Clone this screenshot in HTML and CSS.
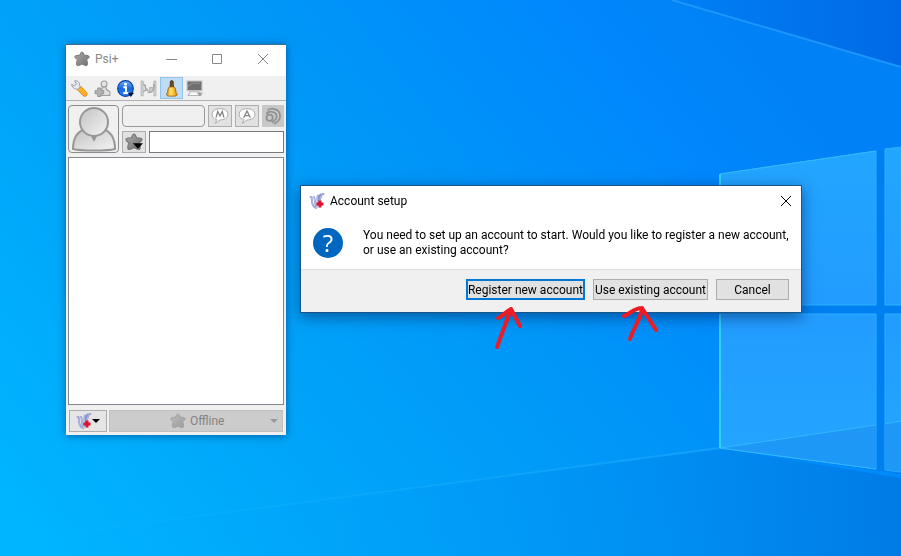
FILE: index.html
```
<!DOCTYPE html>
<html lang="en">
<head>
  <meta charset="UTF-8" />
  <title>Psi+</title>
  <link rel="stylesheet" href="styles.css">
</head>
<body>
  <svg class="symbols" aria-hidden="true">
    <defs>
      <linearGradient id="silver" x1="0" y1="0" x2="1" y2="1">
        <stop offset="0" stop-color="#aaa" />
        <stop offset="1" stop-color="#707070" />
      </linearGradient>
      <linearGradient id="person" x1="0" y1="0" x2="1" y2="1">
        <stop offset="0" stop-color="#c2c2c2" />
        <stop offset="1" stop-color="#f4f4f4" />
      </linearGradient>
      <linearGradient id="gold" x1="0" y1="0" x2="1" y2="0">
        <stop offset="0" stop-color="#e88a00" />
        <stop offset="0.4" stop-color="#ffe36a" />
        <stop offset="1" stop-color="#e89000" />
      </linearGradient>
      <linearGradient id="info" x1="0" y1="0" x2="0" y2="1">
        <stop offset="0" stop-color="#6fb4ff" />
        <stop offset="0.5" stop-color="#1766dd" />
        <stop offset="1" stop-color="#2590ff" />
      </linearGradient>
    </defs>
    <symbol id="star" viewBox="0 0 16 16">
      <path d="M8 1c1 0 1.500 1 2.200 3.200 3.300 0 5 .6 5 1.600s-1 1.700-2.600 3c1.200 3.200 1.200 5 .4 5.600S11 14.500 8 13c-3 1.500-4.200 2-5 1.400S2.200 12 3.400 8.800C1.800 7.500.8 6.800.8 5.800s1.700-1.600 5-1.600C6.500 2 7 1 8 1z" fill="url(#silver)" stroke="#777" stroke-width="1" />
    </symbol>
    <symbol id="psi" viewBox="0 0 16 16">
      <path d="M1.500 4c2-.5 1 2 1.500 5s1.500 5 4 6M5 4c1.500 2 0 6 2.500 10M9 2.500c-2 3 1 6-1.500 12M14.500 1C11.500.5 12 5 10.500 8M11.500 1.500C9 4 10 7 9 10" fill="none" stroke="#8891cc" stroke-width="1.800" stroke-linecap="round" />
      <path d="M1.500 4c2-.5 1 2 1.500 5s1.500 5 4 6M5 4c1.500 2 0 6 2.500 10M9 2.500c-2 3 1 6-1.500 12M14.500 1C11.500.5 12 5 10.500 8" fill="none" stroke="#ccd5f6" stroke-width=".7" stroke-linecap="round" />
      <path d="M9.500 7.500h3v2h2v3h-2v2h-3v-2h-2v-3h2z" fill="#d9142c" />
    </symbol>
    <symbol id="close" viewBox="0 0 12 12">
      <path d="M1 1l10 10M11 1L1 11" fill="none" stroke="currentColor" />
    </symbol>
  </svg>

  <svg class="wallpaper" viewBox="0 0 901 556" preserveAspectRatio="none" aria-hidden="true">
    <defs>
      <linearGradient id="sky" x1="0" y1="0.900" x2="1" y2="0.400">
        <stop offset="0" stop-color="#00b5ff" />
        <stop offset="0.300" stop-color="#00a5f9" />
        <stop offset="0.600" stop-color="#0096f8" />
        <stop offset="0.850" stop-color="#0088fc" />
        <stop offset="1" stop-color="#0082f6" />
      </linearGradient>
      <linearGradient id="corner" x1="0" y1="0" x2="1" y2="0">
        <stop offset="0" stop-color="#0080f5" />
        <stop offset="1" stop-color="#006ae6" />
      </linearGradient>
      <linearGradient id="floor" x1="0" y1="0" x2="1" y2="0">
        <stop offset="0" stop-color="#00b4ff" stop-opacity="0" />
        <stop offset="0.600" stop-color="#0092f4" stop-opacity="0.500" />
        <stop offset="1" stop-color="#007be6" />
      </linearGradient>
      <linearGradient id="beam" x1="0" y1="0" x2="1" y2="0">
        <stop offset="0" stop-color="#2cbcff" stop-opacity="0" />
        <stop offset="1" stop-color="#2cbcff" stop-opacity="0.400" />
      </linearGradient>
      <linearGradient id="pane" x1="0" y1="0" x2="0" y2="1">
        <stop offset="0" stop-color="#22a6ff" />
        <stop offset="0.500" stop-color="#229cff" />
        <stop offset="1" stop-color="#24a6ff" />
      </linearGradient>
    </defs>
    <rect width="901" height="556" fill="url(#sky)" />
    <path d="M672 0H901V67z" fill="url(#corner)" />
    <path d="M672 0L901 67" stroke="#1c96fa" stroke-width="2" />
    <path d="M0 542L720 448 901 478V556H0z" fill="url(#floor)" />
    <path d="M0 542L720 448" stroke="url(#beam)" stroke-width="2" />
    <path d="M720 174L901 147V474L720 448z" fill="#007ff0" />
    <path d="M720 174L876 151V305H720zM885 149L901 147V305H885zM720 314H876V469L720 448zM885 314H901V472L885 470z" fill="url(#pane)" stroke="#2bb2ff" stroke-width="1" />
    <path d="M720 448L876 425V469zM885 424L901 421V472L885 470z" fill="#1b90f0" opacity="0.600" />
    <path d="M720 448L876 425M885 424L901 421M720 174L876 151M720 448L876 469" fill="none" stroke="#34b8ff" stroke-width="1" />
    <path d="M720 174V305M720 314V448" stroke="#32d2ff" stroke-width="2" />
  </svg>

  <main class="desktop">
    <section class="window roster" aria-label="Psi+">
      <header class="titlebar">
        <svg class="icon"><use href="#star" /></svg>
        <h1>Psi+</h1>
        <button class="caption" aria-label="Minimize"><svg viewBox="0 0 12 12"><path d="M1 6.500h11" stroke="currentColor" /></svg></button>
        <button class="caption" aria-label="Maximize"><svg viewBox="0 0 12 12"><path d="M1.500 1.500h9v9h-9z" fill="none" stroke="currentColor" /></svg></button>
        <button class="caption" aria-label="Close"><svg><use href="#close" /></svg></button>
      </header>

      <nav class="toolbar">
        <button aria-label="Options">
          <svg viewBox="0 0 16 16">
            <path d="M8 8l5 5" stroke="#d07a10" stroke-width="5" stroke-linecap="round" />
            <path d="M8 8l5 5" stroke="#ffb02a" stroke-width="4" stroke-linecap="round" />
            <path d="M3.500.8C5.500.3 8 1.500 8 4.500c0 .6 0 1 .8 2L6.500 9C5 8.200 1 8.500.6 4L3 5.500 5 4z" fill="#e6e9f0" stroke="#8990a0" stroke-width=".8" />
          </svg>
        </button>
        <button aria-label="Add contact">
          <svg viewBox="0 0 16 16">
            <circle cx="9.500" cy="3.800" r="2.800" fill="#e4e4e4" stroke="#9c9c9c" />
            <path d="M8 6.500h3L12 9l3 2v3.500H6l1-4z" fill="#ddd" stroke="#9c9c9c" />
            <path d="M3.500 7.500h3V10H9v3H6.500v2.500h-3V13H1v-3h2.500z" fill="#b4b4b4" stroke="#8c8c8c" stroke-width=".8" />
          </svg>
        </button>
        <button aria-label="Information">
          <svg viewBox="0 0 16 16">
            <circle cx="8" cy="8" r="7.400" fill="url(#info)" stroke="#073b9c" />
            <circle cx="8" cy="4" r="1.400" fill="#fff" />
            <path d="M6 6.800h2.500V12M6 12.300h5" fill="none" stroke="#fff" stroke-width="1.800" />
            <path d="M10 12h6l-3 4z" fill="#001438" />
          </svg>
        </button>
        <button aria-label="Discover services">
          <svg viewBox="0 0 16 16">
            <path d="M1 1h2v14H1zM13 1h2v14h-2z" fill="#d2d2d2" stroke="#a8a8a8" stroke-width=".6" />
            <path d="M3 3.500l2 2v2l2 2M13 3.500v5l-3 3H7M3 11l3-2 2 1" fill="none" stroke="#a8a8a8" stroke-width="1.500" />
            <path d="M9 7h3v4H9z" fill="#ccc" stroke="#a0a0a0" stroke-width=".6" />
          </svg>
        </button>
        <button class="pressed" aria-label="Mute sound" aria-pressed="true">
          <svg viewBox="0 0 16 16">
            <path d="M7 1.200C7 .4 9.500.4 9.500 1.200L9.800 7H6.600z" fill="#775019" stroke="#3c2a12" stroke-width=".8" />
            <path d="M6 6.500h4.500c1.200 1 1.500 3 1.800 5.500l1 1c0 2-1 2.200-5 2.200s-5-.2-5-2.200l1-1C4.500 9.500 4.800 7.500 6 6.500z" fill="url(#gold)" stroke="#9c5500" stroke-width=".8" />
          </svg>
        </button>
        <button aria-label="Console">
          <svg viewBox="0 0 16 16">
            <path d="M1 1h14v9H1z" fill="#707070" stroke="#c4c4c4" />
            <path d="M2 6l4-3h7" fill="none" stroke="#949494" />
            <path d="M4 11h8l2 3.500H2z" fill="#f8f8f8" stroke="#b4b4b4" />
            <path d="M10 12h6l-3 3z" fill="#999" />
          </svg>
        </button>
      </nav>

      <div class="profile">
        <button class="avatar" aria-label="Avatar">
          <svg viewBox="0 0 46 46">
            <path d="M2 43c0-10 3-17 12-20l9 8 9-8c9 3 12 10 12 20-8 2-34 2-42 0z" fill="url(#person)" stroke="#979797" stroke-width="2" />
            <circle cx="23" cy="16" r="14" fill="url(#person)" stroke="#979797" stroke-width="2" />
            <path d="M20 30h6l-3 6z" fill="#979797" />
          </svg>
        </button>
        <div class="fields">
          <div class="row">
            <input class="nick" type="text" aria-label="Nickname" readonly>
            <button class="tool" aria-label="Mood">
              <svg viewBox="0 0 16 16"><path d="M8 1.500c4 0 7 2 7 5s-3 5-7 5l-4 3 1-3.500C2.500 10.500 1 9 1 6.500c0-3 3-5 7-5z" fill="#fff" stroke="#a4a4a4" stroke-width=".8" /><path d="M4.500 9.500L6 4l2 4 2-4 1.500 5.500" fill="none" stroke="#888" stroke-width="1.200" /></svg>
            </button>
            <button class="tool" aria-label="Activity">
              <svg viewBox="0 0 16 16"><path d="M8 1.500c4 0 7 2 7 5s-3 5-7 5l-4 3 1-3.500C2.500 10.500 1 9 1 6.500c0-3 3-5 7-5z" fill="#fff" stroke="#a4a4a4" stroke-width=".8" /><path d="M5 9.500L8 3.500l3 6M6 7.700h4" fill="none" stroke="#888" stroke-width="1.200" /></svg>
            </button>
            <button class="tool location" aria-label="Location">
              <svg viewBox="0 0 16 16"><g fill="none" stroke="#929292" stroke-width="1.600"><path d="M3 3c4-3 10-1 11 3s-1 7-5 9" /><path d="M2 6c3-3 8-2 9 1s-1 5-4 7" /><circle cx="5" cy="9.500" r="2.800" /></g></svg>
            </button>
          </div>
          <div class="row">
            <button class="tool" aria-label="Status">
              <svg viewBox="0 0 16 16"><use href="#star" /><path d="M7 9h9l-4.500 5z" fill="#000" /></svg>
            </button>
            <input class="message" type="text" aria-label="Status message">
          </div>
        </div>
      </div>

      <div class="contacts"></div>

      <footer class="statusbar">
        <button class="menu" aria-label="Main menu">
          <svg class="icon"><use href="#psi" /></svg>
          <svg class="arrow" viewBox="0 0 8 4"><path d="M0 0h8L4 4z" /></svg>
        </button>
        <button class="offline" disabled>
          <svg class="icon"><use href="#star" /></svg>
          <span>Offline</span>
          <svg class="arrow" viewBox="0 0 8 4"><path d="M0 0h8L4 4z" /></svg>
        </button>
      </footer>
    </section>

    <section class="window dialog" role="dialog" aria-labelledby="dialog-title">
      <header class="titlebar">
        <svg class="icon"><use href="#psi" /></svg>
        <h2 id="dialog-title">Account setup</h2>
        <button class="caption" aria-label="Close"><svg><use href="#close" /></svg></button>
      </header>
      <div class="content">
        <span class="question">?</span>
        <p>You need to set up an account to start. Would you like to register a new account,<br>or use an existing account?</p>
      </div>
      <footer class="actions">
        <button class="primary">Register new account</button>
        <button>Use existing account</button>
        <button class="cancel">Cancel</button>
      </footer>
    </section>

    <svg class="mark mark-register" viewBox="0 0 32 46" aria-hidden="true">
      <path d="M4 42L18 4 27 21M5 13C10 11 12 7 18 4" />
    </svg>
    <svg class="mark mark-existing" viewBox="0 0 40 40" aria-hidden="true">
      <path d="M9 35C12 25 20 15 21 4L35 26M3 12C9 10 13 4 21 4" />
    </svg>
  </main>
</body>
</html>
```
FILE: styles.css
```
* {
  box-sizing: border-box;
}
body {
  margin: 0;
  font-family: Roboto, "Noto Sans", sans-serif;
  font-size: 12px;
  color: #000;
  overflow: hidden;
}
h1, h2, p {
  margin: 0;
  font-size: 12px;
  font-weight: normal;
}
button, input {
  font: inherit;
  color: inherit;
  padding: 0;
  margin: 0;
}
svg {
  display: block;
}
.symbols {
  position: absolute;
  width: 0;
  height: 0;
}
.wallpaper {
  position: fixed;
  inset: 0;
  width: 100%;
  height: 100%;
}
.desktop {
  position: relative;
  min-height: 100vh;
}
.icon {
  width: 16px;
  height: 16px;
  flex: none;
}

/* windows */
.window {
  position: absolute;
  display: flex;
  flex-direction: column;
  background-color: #f0f0f0;
}
.titlebar {
  display: flex;
  align-items: center;
  background-color: white;
}
.titlebar h1, .titlebar h2 {
  flex: 1;
  padding-left: 5px;
}
.caption {
  display: flex;
  align-items: center;
  justify-content: center;
  border: none;
  background: none;
}
.caption svg {
  width: 12px;
  height: 12px;
}

/* contact list */
.roster {
  left: 66px;
  top: 44px;
  width: 220px;
  border-top: 1px solid #3a6e96;
  box-shadow: 0 1px 8px rgba(0, 30, 80, 0.5);
}
.roster .titlebar {
  height: 31px;
  padding: 0 0 3px 8px;
  color: #888;
}
.roster .caption {
  width: 46px;
  height: 28px;
}
.toolbar {
  display: flex;
  height: 25px;
  padding: 1px 2px;
  border-bottom: 1px solid #b0b0b0;
}
.toolbar button {
  display: flex;
  align-items: center;
  justify-content: center;
  width: 23px;
  height: 22px;
  border: 1px solid transparent;
  background: none;
}
.toolbar .pressed {
  border-color: #90c4ec;
  background-color: #bfdcf4;
}
.toolbar svg {
  width: 17px;
  height: 17px;
}
.profile {
  display: flex;
  gap: 3px;
  padding: 4px 2px;
}
.avatar {
  width: 51px;
  height: 48px;
  border: 1px solid #8c8c8c;
  border-radius: 4px;
  background-color: #f0f0f0;
}
.avatar svg {
  width: 46px;
  height: 46px;
  margin: auto;
}
.fields {
  flex: 1;
  min-width: 0;
  display: flex;
  flex-direction: column;
  justify-content: space-between;
}
.row {
  display: flex;
  gap: 3px;
}
.nick, .message {
  flex: 1;
  min-width: 0;
  height: 22px;
  border: 1px solid #7a7a7a;
  background-color: white;
}
.nick {
  border-color: #9a9a9a;
  border-radius: 4px;
  background-color: #f0f0f0;
}
.tool {
  width: 24px;
  height: 22px;
  border: 1px solid #adadad;
  background-color: #e1e1e1;
}
.tool svg {
  width: 18px;
  height: 18px;
  margin: auto;
}
.location {
  width: 22px;
  border-color: #c8c8c8;
  background-color: #c8c8c8;
}
.contacts {
  height: 248px;
  margin: 0 2px;
  border: 1px solid #828790;
  background-color: white;
}
.statusbar {
  display: flex;
  gap: 2px;
  padding: 5px 3px 3px;
}
.statusbar button {
  display: flex;
  align-items: center;
  height: 22px;
  border: 1px solid #adadad;
  background-color: #e5e5e5;
}
.arrow {
  width: 8px;
  height: 4px;
}
.menu {
  width: 38px;
  justify-content: center;
}
.statusbar .offline {
  flex: 1;
  gap: 4px;
  padding: 0 4px 0 60px;
  border-color: #bfbfbf;
  background-color: #ccc;
  color: #838383;
}
.offline .icon {
  opacity: 0.5;
}
.offline .arrow {
  margin-left: auto;
  fill: #999;
}

/* account dialog */
.dialog {
  left: 300px;
  top: 185px;
  width: 502px;
  border: 1px solid #1b5588;
  box-shadow: 0 4px 14px rgba(0, 20, 70, 0.5);
}
.dialog .titlebar {
  height: 30px;
  padding-left: 8px;
}
.dialog .caption {
  width: 30px;
  height: 28px;
}
.content {
  display: flex;
  gap: 20px;
  padding: 12px 12px 11px;
  background-color: white;
  border-bottom: 1px solid #dfdfdf;
}
.content p {
  line-height: 15px;
  white-space: nowrap;
}
.question {
  flex: none;
  width: 30px;
  height: 30px;
  border-radius: 50%;
  background-color: #0067c0;
  color: white;
  font-family: "Open Sans", sans-serif;
  font-size: 24px;
  line-height: 30px;
  text-align: center;
}
.actions {
  display: flex;
  justify-content: flex-end;
  gap: 8px;
  padding: 9px 12px 12px;
}
.actions button {
  height: 21px;
  padding: 0 1px;
  border: 1px solid #adadad;
  background-color: #e1e1e1;
  white-space: nowrap;
}
.actions .primary {
  padding: 0;
  border: 2px solid #0078d7;
}
.actions .cancel {
  width: 73px;
}

/* hand-drawn arrows */
.mark {
  position: absolute;
  fill: none;
  stroke: #ed1c24;
  stroke-width: 4;
  stroke-linecap: round;
  stroke-linejoin: round;
}
.mark-register {
  left: 493px;
  top: 305px;
  width: 32px;
  height: 46px;
}
.mark-existing {
  left: 621px;
  top: 304px;
  width: 40px;
  height: 40px;
}
```
